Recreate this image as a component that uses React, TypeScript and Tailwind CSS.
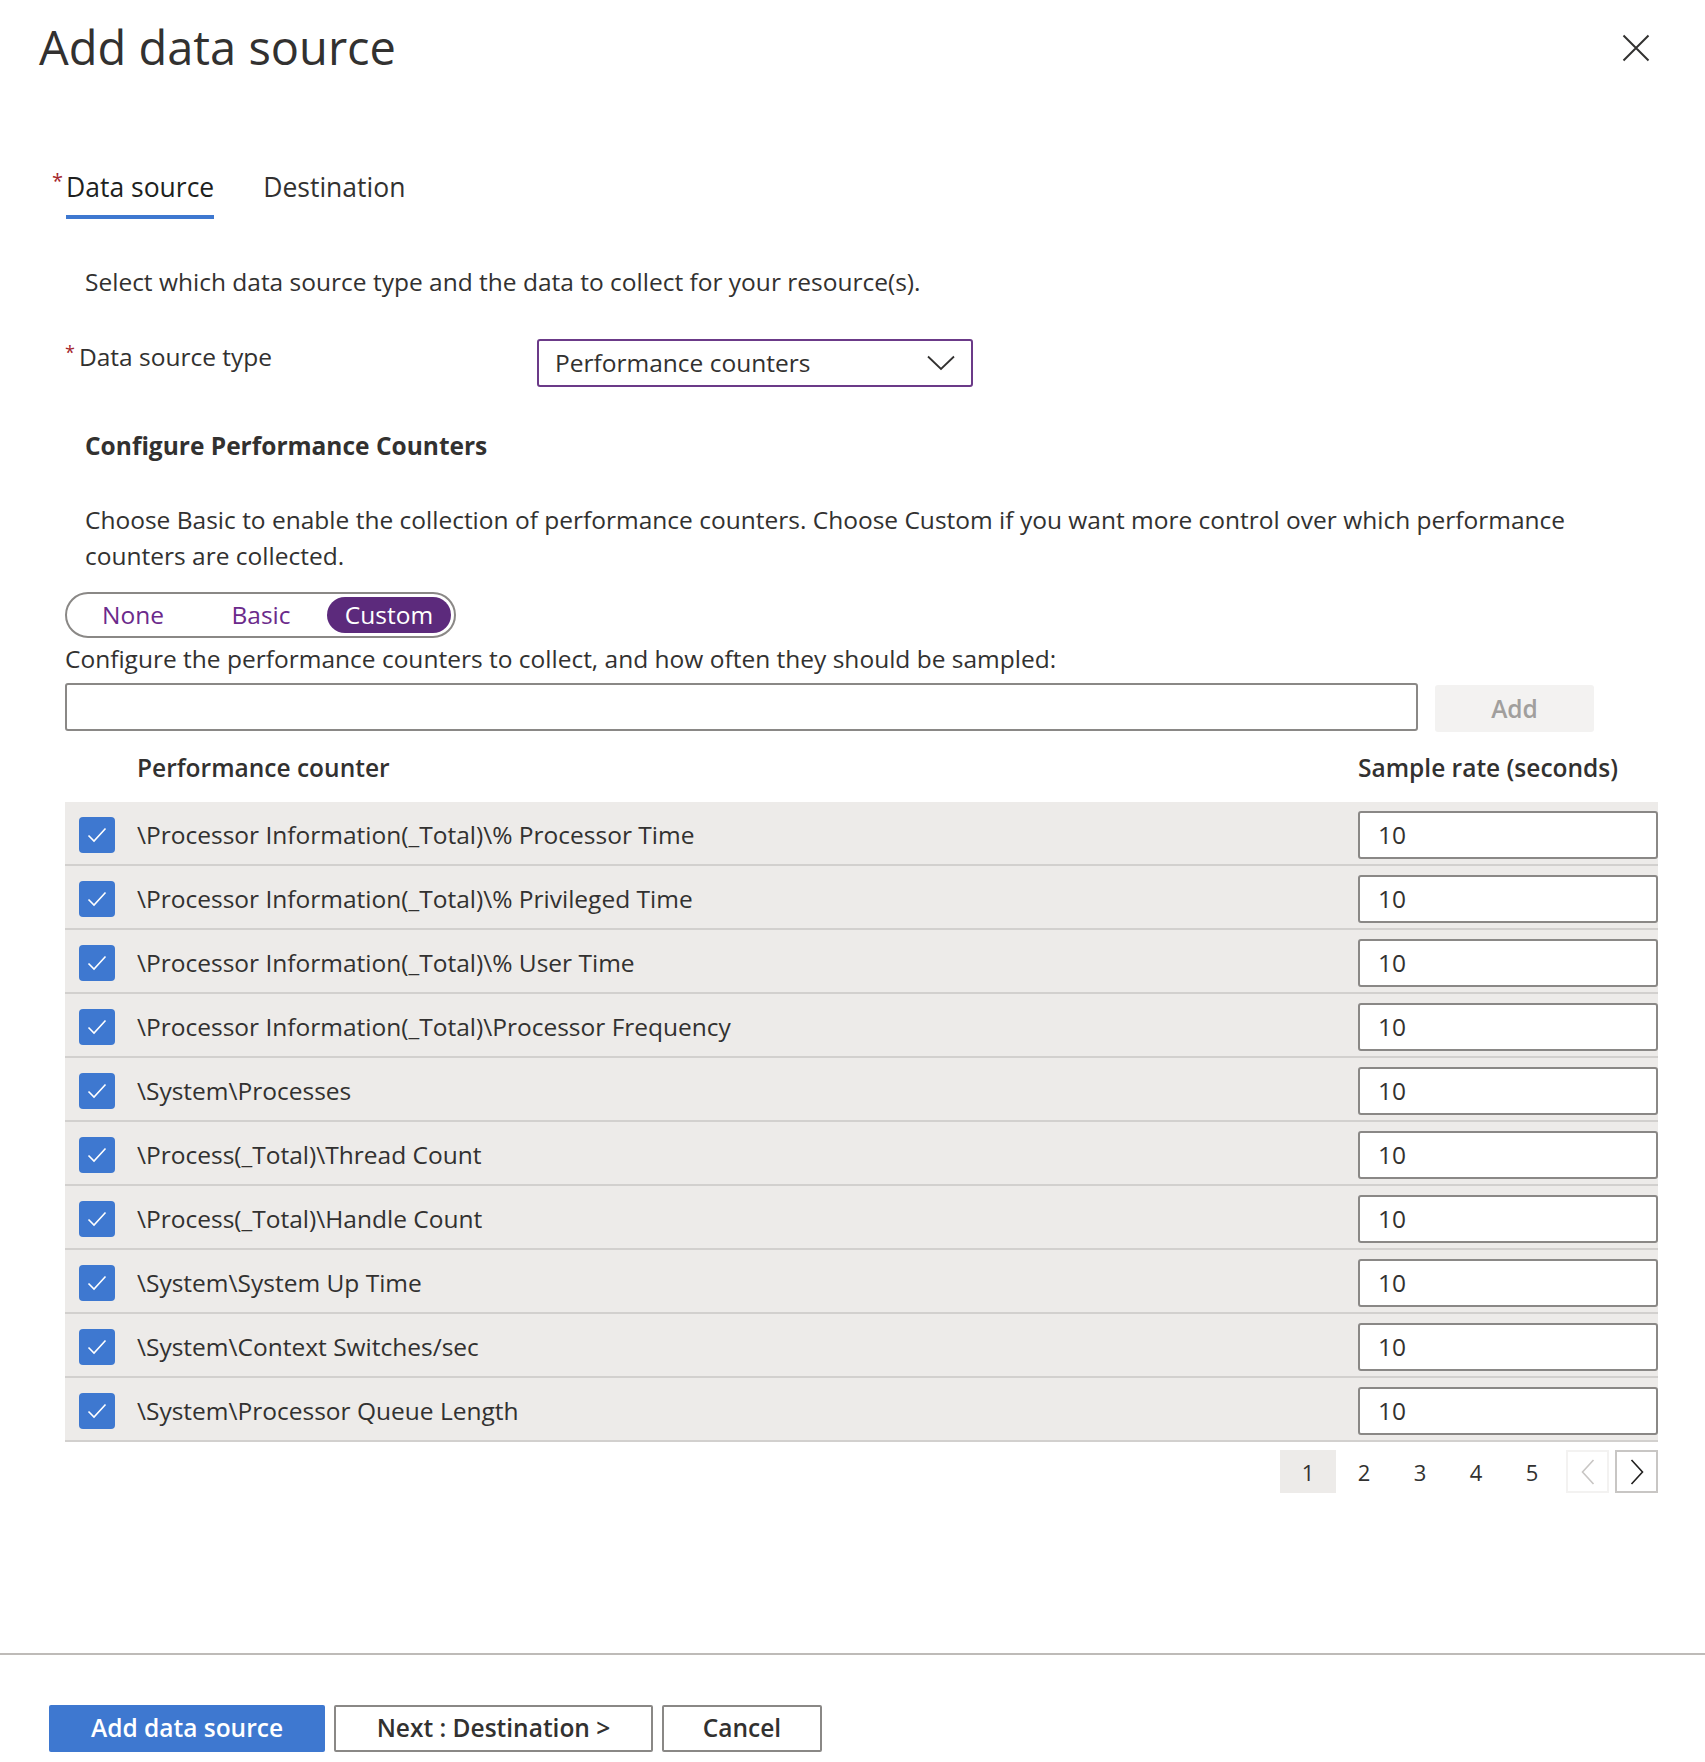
import React from "react";

const rows = [
  "\\Processor Information(_Total)\\% Processor Time",
  "\\Processor Information(_Total)\\% Privileged Time",
  "\\Processor Information(_Total)\\% User Time",
  "\\Processor Information(_Total)\\Processor Frequency",
  "\\System\\Processes",
  "\\Process(_Total)\\Thread Count",
  "\\Process(_Total)\\Handle Count",
  "\\System\\System Up Time",
  "\\System\\Context Switches/sec",
  "\\System\\Processor Queue Length",
];

function Check() {
  return (
    <div className="w-[36px] h-[36px] rounded-[4px] bg-[#3e78d0] flex items-center justify-center shrink-0">
      <svg width="36" height="36" viewBox="0 0 36 36">
        <polyline points="9.5,18.5 15,24 26.5,11.5" fill="none" stroke="white" strokeWidth="1.6" />
      </svg>
    </div>
  );
}

export default function App() {
  return (
    <div
      className="w-[1705px] h-[1762px] bg-white text-[#323130] flex flex-col"
      style={{ fontFamily: "'Open Sans', 'Noto Sans', sans-serif" }}
    >
      {/* Header */}
      <div className="flex items-start justify-between pl-[39px] pr-[54px] pt-[19px]">
        <h1 className="text-[47px] leading-[56px] font-normal text-[#323130]">Add data source</h1>
        <button className="mt-[14px] w-[30px] h-[30px] flex items-center justify-center">
          <svg width="28" height="28" viewBox="0 0 28 28">
            <path d="M1.5 1.5 L26.5 26.5 M26.5 1.5 L1.5 26.5" stroke="#323130" strokeWidth="2" fill="none" />
          </svg>
        </button>
      </div>

      {/* Tabs */}
      <div className="flex items-start pl-[52px] mt-[94px] text-[26.5px] leading-[36px]">
        <span className="text-[#a4262c] text-[20px] leading-[20px] mt-[2px] mr-[3px]">*</span>
        <span className="text-[#201f1e] border-b-[4px] border-[#3e78d0] pb-[10px]">Data source</span>
        <span className="ml-[49px] text-[#323130]">Destination</span>
      </div>

      {/* Content */}
      <div className="pl-[65px] pr-[47px] text-[24.5px] leading-[36px]">
        <p className="mt-[45px] pl-[20px]">Select which data source type and the data to collect for your resource(s).</p>

        <div className="mt-[39px] flex items-start">
          <div className="w-[472px] flex items-start">
            <span className="text-[#a4262c] text-[18px] leading-[18px] mt-[4px] mr-[4px]">*</span>
            <span>Data source type</span>
          </div>
          <div className="w-[436px] h-[48px] border-2 border-[#6b3a88] rounded-[3px] flex items-center justify-between pl-[16px] pr-[16px]">
            <span>Performance counters</span>
            <svg width="28" height="16" viewBox="0 0 28 16">
              <polyline points="1,1.5 14,14 27,1.5" fill="none" stroke="#323130" strokeWidth="1.8" />
            </svg>
          </div>
        </div>

        <h2 className="mt-[41px] pl-[20px] font-bold">Configure Performance Counters</h2>

        <p className="mt-[38px] pl-[20px]">
          Choose Basic to enable the collection of performance counters. Choose Custom if you want more control over which performance counters are collected.
        </p>

        <div className="mt-[18px] w-[391px] h-[46px] border-2 border-[#8a8886] rounded-full flex items-center pl-[2px]">
          <span className="w-[128px] text-center text-[#6b2a8b]">None</span>
          <span className="w-[128px] text-center text-[#6b2a8b]">Basic</span>
          <span className="ml-[2px] w-[124px] h-[36px] rounded-full bg-[#5c2a7c] text-white flex items-center justify-center">Custom</span>
        </div>

        <p className="mt-[3px]">Configure the performance counters to collect, and how often they should be sampled:</p>

        <div className="mt-[6px] flex items-start">
          <div className="w-[1353px] h-[48px] border-2 border-[#8a8886] rounded-[3px]" />
          <button className="ml-[17px] mt-[2px] w-[159px] h-[47px] bg-[#f3f2f1] text-[#a19f9d] font-semibold rounded-[3px]">Add</button>
        </div>

        <div className="mt-[18px] flex font-semibold">
          <span className="pl-[72px] flex-1">Performance counter</span>
          <span className="w-[300px]">Sample rate (seconds)</span>
        </div>

        <div className="mt-[16px]">
          {rows.map((r) => (
            <div key={r} className="h-[64px] bg-[#edebe9] border-b-2 border-[#d2d0ce] flex items-center pl-[14px] pt-[3px]">
              <Check />
              <span className="ml-[22px] flex-1 text-[#323130]">{r}</span>
              <div className="w-[300px] h-[48px] bg-white border-2 border-[#8a8886] rounded-[3px] flex items-center pl-[18px]">
                10
              </div>
            </div>
          ))}
        </div>

        <div className="mt-[8px] flex justify-end items-center text-[22px]">
          <span className="w-[56px] h-[43px] bg-[#edebe9] flex items-center justify-center">1</span>
          <span className="w-[56px] h-[43px] flex items-center justify-center">2</span>
          <span className="w-[56px] h-[43px] flex items-center justify-center">3</span>
          <span className="w-[56px] h-[43px] flex items-center justify-center">4</span>
          <span className="w-[56px] h-[43px] flex items-center justify-center">5</span>
          <span className="ml-[6px] w-[43px] h-[43px] border-2 border-[#f3f2f1] flex items-center justify-center">
            <svg width="14" height="26" viewBox="0 0 14 26">
              <polyline points="12.5,1 1.5,13 12.5,25" fill="none" stroke="#c8c6c4" strokeWidth="1.6" />
            </svg>
          </span>
          <span className="ml-[6px] w-[43px] h-[43px] border-2 border-[#c8c6c4] flex items-center justify-center">
            <svg width="14" height="26" viewBox="0 0 14 26">
              <polyline points="1.5,1 12.5,13 1.5,25" fill="none" stroke="#201f1e" strokeWidth="1.6" />
            </svg>
          </span>
        </div>
      </div>

      {/* Footer */}
      <div className="mt-auto border-t-2 border-[#bebbb8]">
        <div className="pl-[49px] pt-[50px] pb-[10px] flex gap-[9px] text-[24.5px] font-semibold">
          <button className="w-[276px] h-[47px] bg-[#3e78d0] text-white rounded-[2px]">Add data source</button>
          <button className="w-[319px] h-[47px] border-2 border-[#8a8886] text-[#323130] rounded-[2px]">Next : Destination &gt;</button>
          <button className="w-[160px] h-[47px] border-2 border-[#8a8886] text-[#323130] rounded-[2px]">Cancel</button>
        </div>
      </div>
    </div>
  );
}
